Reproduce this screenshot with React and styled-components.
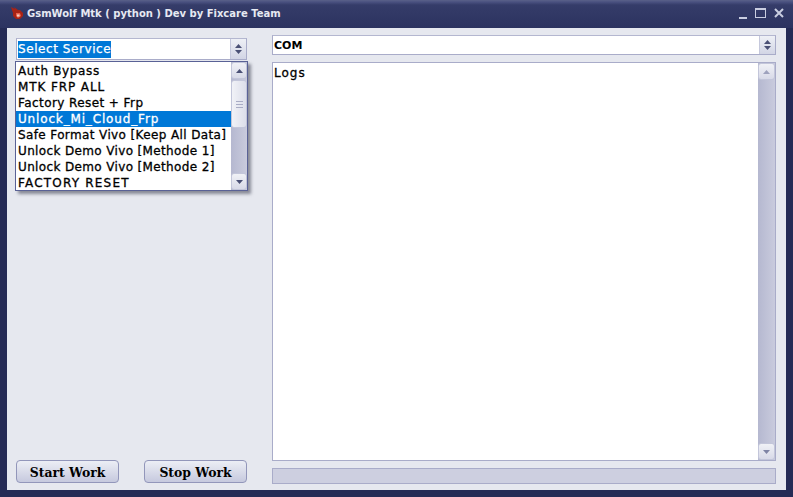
import styled, { createGlobalStyle } from 'styled-components';

// spacing evens out the wider hinted glyphs of the original font
const services = [
  { name: 'Auth Bypass', spacing: 0.64 },
  { name: 'MTK FRP ALL', spacing: 0.9 },
  { name: 'Factory Reset + Frp', spacing: 0.42 },
  { name: 'Unlock_Mi_Cloud_Frp', spacing: 0.84 },
  { name: 'Safe Format Vivo [Keep All Data]', spacing: 0.38 },
  { name: 'Unlock Demo Vivo [Methode 1]', spacing: 0.36 },
  { name: 'Unlock Demo Vivo [Methode 2]', spacing: 0.36 },
  { name: 'FACTORY RESET', spacing: 1.2 },
];

const GlobalStyle = createGlobalStyle`
  html, body {
    margin: 0;
    padding: 0;
    width: 793px;
    height: 497px;
    overflow: hidden;
    background: #252b55;
  }
`;

const Window = styled.div`
  box-sizing: border-box;
  width: 793px;
  height: 497px;
  display: flex;
  flex-direction: column;
  padding: 0 7px 7px 7px;
  background: #252b55;
  border-radius: 6px 6px 0 0;
  font-family: "DejaVu Sans", sans-serif;
`;

const TitleBar = styled.div`
  height: 28px;
  margin: 0 -7px;
  padding: 0 9px 2px 11px;
  flex: none;
  display: flex;
  align-items: center;
  gap: 4px;
  box-sizing: border-box;
  background: linear-gradient(#5a6189 0, #4a5180 2px, #353c69 5px, #2c3360 28px);
`;

const Title = styled.span`
  flex: 1;
  color: #e6e9f2;
  font-size: 10px;
  font-weight: bold;
  white-space: nowrap;
`;

const WindowButtons = styled.div`
  display: flex;
  align-items: center;
  gap: 8px;
`;

const Client = styled.div`
  flex: 1;
  min-height: 0;
  display: flex;
  background: #e6e8ef;
  border-right: 1px solid #e6e8ef;
`;

const LeftColumn = styled.div`
  position: relative;
  box-sizing: border-box;
  width: 265px;
  padding: 10px 25px 7px 9px;
  display: flex;
  flex-direction: column;
  justify-content: space-between;
`;

const RightColumn = styled.div`
  flex: 1;
  min-width: 0;
  padding: 7px 9px 6px 0;
  display: flex;
  flex-direction: column;
  gap: 7px;
`;

const Combo = styled.div`
  box-sizing: border-box;
  height: ${(p) => p.$height}px;
  flex: none;
  display: flex;
  background: #fff;
  border: 1px solid #a9acc9;
  border-top-color: #b4b7d0;
`;

const ComboText = styled.div`
  flex: 1;
  padding-left: 1px;
  display: flex;
  align-items: center;
  font-size: ${(p) => (p.$bold ? 11 : 12)}px;
  font-weight: ${(p) => (p.$bold ? 'bold' : 'normal')};
  color: #000;
`;

const Selected = styled.span`
  background: #0078d7;
  color: #fff;
  margin-top: 1px;
  padding: 1px 0;
  line-height: 15px;
  letter-spacing: 0.57px;
  -webkit-text-stroke: 0.25px #fff;
`;

const Spinner = styled.div`
  width: 15px;
  flex: none;
  display: flex;
  flex-direction: column;
  align-items: center;
  justify-content: center;
  gap: 2px;
  background: linear-gradient(#eef0f6, #d2d5e5);
  border-left: 1px solid #c5c8dc;
`;

const ListBox = styled.div`
  position: absolute;
  left: 8px;
  top: 33px;
  box-sizing: border-box;
  width: 233px;
  height: 130px;
  display: flex;
  background: #fff;
  border: 1px solid #5a6296;
  box-shadow: 3px 3px 3px rgba(60, 62, 80, 0.55);
`;

const Items = styled.ul`
  flex: 1;
  min-width: 0;
  margin: 0;
  padding: 1px 0 0;
  list-style: none;
`;

const Item = styled.li`
  height: 16px;
  padding-left: 2px;
  font-size: 12px;
  line-height: 16px;
  white-space: nowrap;
  letter-spacing: ${(p) => p.$spacing}px;
  -webkit-text-stroke: 0.3px ${(p) => (p.$active ? '#fff' : '#000')};
  color: ${(p) => (p.$active ? '#fff' : '#000')};
  background: ${(p) => (p.$active ? '#0078d7' : 'transparent')};
`;

const ScrollTrack = styled.div`
  width: ${(p) => p.$width}px;
  flex: none;
  display: flex;
  flex-direction: column;
  background: linear-gradient(90deg, #b5b8d0, #c9cbdd);
`;

const ScrollButton = styled.div`
  box-sizing: border-box;
  height: 17px;
  flex: none;
  display: flex;
  align-items: center;
  justify-content: center;
  background: linear-gradient(#f0f1f6, #d8dae8);
  border: 1px solid #c3c6da;
  border-radius: 3px;
`;

const Thumb = styled.div`
  box-sizing: border-box;
  height: 48px;
  margin-top: 1px;
  flex: none;
  display: flex;
  align-items: center;
  justify-content: center;
  background: linear-gradient(90deg, #f1f2f7, #dcdeea);
  border: 1px solid #c3c6da;
  border-radius: 3px;
`;

const Grip = styled.div`
  width: 7px;
  height: 5px;
  border-top: 1px solid #a9acc5;
  border-bottom: 1px solid #a9acc5;
  position: relative;
  &::after {
    content: '';
    position: absolute;
    left: 0;
    right: 0;
    top: 2px;
    height: 1px;
    background: #a9acc5;
  }
`;

const TrackFill = styled.div`
  flex: 1;
`;

const Buttons = styled.div`
  display: flex;
  justify-content: space-between;
`;

const WorkButton = styled.button`
  box-sizing: border-box;
  width: 103px;
  height: 23px;
  padding: 1px 0 0;
  background: linear-gradient(#eceef5, #c6c9de);
  border: 1px solid #9296ba;
  border-radius: 4px;
  font-family: "DejaVu Serif", serif;
  font-size: 12.4px;
  font-weight: bold;
  color: #000;
`;

const LogPanel = styled.div`
  flex: 1;
  min-height: 0;
  display: flex;
  background: #fff;
  border: 1px solid #a9acc9;
`;

const LogText = styled.div`
  flex: 1;
  padding: 2px 1px;
  font-size: 12px;
  line-height: 16px;
  letter-spacing: 1px;
  -webkit-text-stroke: 0.3px #000;
  color: #000;
`;

const Progress = styled.div`
  box-sizing: border-box;
  height: 16px;
  flex: none;
  background: #cdcfe0;
  border: 1px solid #a9acc9;
`;

function Arrow({ up, color = '#4a5075' }) {
  return (
    <svg width="7" height="4" viewBox="0 0 7 4">
      <path d={up ? 'M3.5 0L7 4H0Z' : 'M0 0H7L3.5 4Z'} fill={color} />
    </svg>
  );
}

function GameIcon() {
  return (
    <svg width="12" height="12" viewBox="0 0 12 12">
      <path d="M0 0L4 2L3 0L7 3L9 3L12 6L12 9L9 12H5L2 9L2 6Z" fill="#a82315" />
      <path d="M5 6L9 6L10 9L7 11L5 9Z" fill="#e8604a" />
      <path d="M6 7.5H8.5V9.5H6Z" fill="#f4d0c4" />
    </svg>
  );
}

function WindowControls() {
  return (
    <WindowButtons>
      <svg width="8" height="13" viewBox="0 0 8 13">
        <path d="M0 10H8V12H0Z" fill="#c9cde0" />
      </svg>
      <svg width="11" height="10" viewBox="0 0 11 10">
        <path d="M0 0H11V10H0Z M1 2V9H10V2Z" fill="#c9cde0" fillRule="evenodd" />
      </svg>
      <svg width="10" height="10" viewBox="0 0 10 10">
        <path d="M1 1L9 9M9 1L1 9" stroke="#c9cde0" strokeWidth="2" />
      </svg>
    </WindowButtons>
  );
}

function SpinnerArrows() {
  return (
    <Spinner>
      <Arrow up />
      <Arrow />
    </Spinner>
  );
}

export default function App() {
  return (
    <>
      <GlobalStyle />
      <Window>
        <TitleBar>
          <GameIcon />
          <Title>GsmWolf Mtk ( python ) Dev by Fixcare Team</Title>
          <WindowControls />
        </TitleBar>
        <Client>
          <LeftColumn>
            <Combo $height={22}>
              <ComboText>
                <Selected>Select Service</Selected>
              </ComboText>
              <SpinnerArrows />
            </Combo>
            <ListBox>
              <Items>
                {services.map((service, i) => (
                  <Item key={service.name} $active={i === 3} $spacing={service.spacing}>
                    {service.name}
                  </Item>
                ))}
              </Items>
              <ScrollTrack $width={16}>
                <ScrollButton><Arrow up /></ScrollButton>
                <Thumb><Grip /></Thumb>
                <TrackFill />
                <ScrollButton><Arrow /></ScrollButton>
              </ScrollTrack>
            </ListBox>
            <Buttons>
              <WorkButton type="button">Start Work</WorkButton>
              <WorkButton type="button">Stop Work</WorkButton>
            </Buttons>
          </LeftColumn>
          <RightColumn>
            <Combo $height={20}>
              <ComboText $bold>COM</ComboText>
              <SpinnerArrows />
            </Combo>
            <LogPanel>
              <LogText>Logs</LogText>
              <ScrollTrack $width={17}>
                <ScrollButton><Arrow up color="#9ea2bd" /></ScrollButton>
                <TrackFill />
                <ScrollButton><Arrow color="#7f84a5" /></ScrollButton>
              </ScrollTrack>
            </LogPanel>
            <Progress />
          </RightColumn>
        </Client>
      </Window>
    </>
  );
}
